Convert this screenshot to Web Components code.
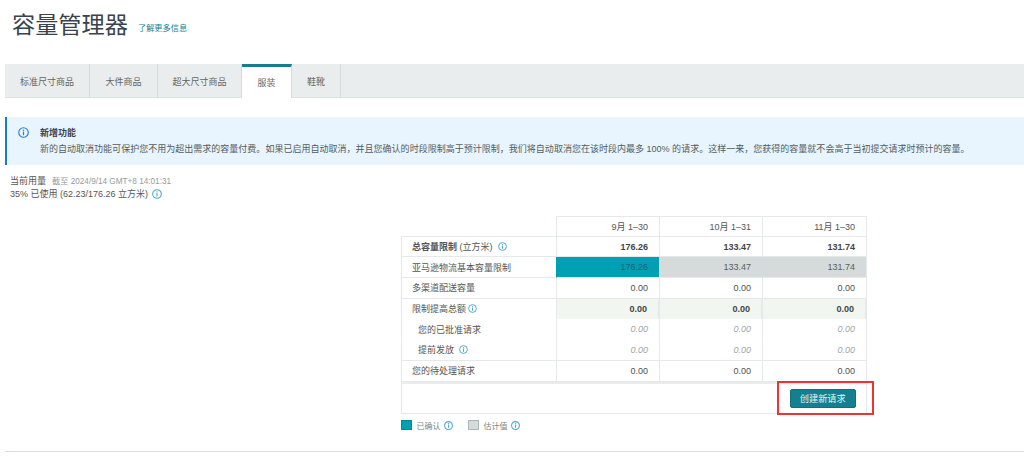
<!doctype html>
<html lang="zh"><head><meta charset="utf-8">
<style>
html,body{margin:0;padding:0;background:#fff}
body{width:1024px;height:456px;overflow:hidden;font-family:"Liberation Sans","Noto Sans CJK SC",sans-serif;color:#444}
.cm{font-family:"Noto Sans CJK TC",sans-serif}
</style></head><body>
<cm-page>
  <cm-header title="容量管理器" link="了解更多信息"></cm-header>
  <cm-tabs items="标准尺寸商品:85,大件商品:68,超大尺寸商品:84,服装:50,鞋靴:49" active="3"></cm-tabs>
  <cm-alert heading="新增功能">新的自动取消功能可保护您不用为超出需求的容量付费。如果已启用自动取消<span class="cm">，</span>并且您确认的时段限制高于预计限制<span class="cm">，</span>我们将自动取消您在该时段内最多 100% 的请求。这样一来<span class="cm">，</span>您获得的容量就不会高于当初提交请求时预计的容量。</cm-alert>
  <cm-usage></cm-usage>
  <cm-table></cm-table>
  <cm-legend></cm-legend>
</cm-page>
<script>
const info=(c='#4aa6c6',s=10,m=0,w=1.25)=>`<svg width="${s}" height="${s}" viewBox="0 0 12 12" style="flex:none;vertical-align:-1.5px;margin-left:${m}px"><circle cx="6" cy="6" r="5.2" fill="none" stroke="${c}" stroke-width="${w}"/><circle cx="6" cy="3.5" r=".8" fill="${c}"/><rect x="5.35" y="5" width="1.3" height="4" fill="${c}"/></svg>`;
function def(name,render){customElements.define(name,class extends HTMLElement{connectedCallback(){if(!this.shadowRoot){this.attachShadow({mode:'open'}).innerHTML=render(this)}}})}
def('cm-page',()=>`<style>:host{display:block;position:relative;height:456px}
.rule{position:absolute;left:5px;right:0;top:451px;height:1px;background:#d5dbdb}</style><slot></slot><div class="rule"></div>`);
def('cm-header',h=>`<style>:host{display:block;height:64px;box-sizing:border-box;padding:12px 0 0 12px}
.w{display:flex;align-items:center;height:26px}
h1{margin:0;font:400 23.2px/26px "Liberation Sans","Noto Sans CJK SC",sans-serif;color:#3a424d}
a{margin-left:10px;font-size:8.2px;color:#14808f;position:relative;top:2px}</style>
<div class="w"><h1>${h.getAttribute('title')}</h1><a>${h.getAttribute('link')}</a></div>`);
def('cm-tabs',h=>{const a=+h.getAttribute('active');return `<style>:host{display:flex;height:34px;margin-left:5px;background:#eaeded;box-shadow:inset 0 -1px 0 #dfe3e3}
.t{box-sizing:border-box;display:flex;align-items:center;justify-content:center;font-size:9px;color:#5f6666;border-right:1px solid #d5dbdb}
.a{background:#fff;border-top:3px solid #14808f;border-right:1px solid #d5dbdb}</style>`+
h.getAttribute('items').split(',').map((s,i)=>{const[t,w]=s.split(':');return `<div class="t ${i==a?'a':''}" style="width:${w}px">${t}</div>`}).join('')});
def('cm-alert',h=>`<style>:host{display:flex;box-sizing:border-box;height:48px;margin:19px 0 0 5px;background:#e8f5fe;border-left:2px solid #1f78c8;padding:10px 0 0 11px;font-size:9px;color:#555c5c}
.b{margin-left:11px;white-space:nowrap}
.h{font-weight:700;line-height:13px;color:#3a424d}.x{line-height:13px;margin-top:2px;font-size:9.02px}</style>
${info('#2c7fd0',11)}<div class="b"><div class="h">${h.getAttribute('heading')}</div><div class="x"><slot></slot></div></div>`);
def('cm-usage',()=>`<style>:host{display:block;margin:10px 0 0 10px;font-size:9px;line-height:13px;color:#555}
small{font-size:8.2px;color:#959b9b;margin-left:6px}</style>
<div>当前用量<small>截至 2024/9/14 GMT+8 14:01:31</small></div><div>35% 已使用 (62.23/176.26 立方米) ${info('#4aa6c6',10,1)}</div>`);
def('cm-table',()=>{
const rows=[
 ['<span><b>总容量限制</b> (立方米)</span>'+info('#4aa6c6',9,5),'b',['176.26','133.47','131.74']],
 ['<span>亚马逊物流基本容量限制</span>','bar',['176.26','133.47','131.74']],
 ['<span>多渠道配送容量</span>','',['0.00','0.00','0.00']],
 ['<span>限制提高总额</span>'+info('#4aa6c6',9,2),'g nb',['0.00','0.00','0.00']],
 ['<span>您的已批准请求</span>','i nb',['0.00','0.00','0.00']],
 ['<span>提前发放</span>'+info('#4aa6c6',9,5),'i',['0.00','0.00','0.00']],
 ['<span>您的待处理请求</span>','',['0.00','0.00','0.00']]];
let g=`<div class="e"></div>`+['9月 1–30','10月 1–31','11月 1–30'].map(t=>`<div class="c hd">${t}</div>`).join('');
rows.forEach(([l,k,v])=>{
 const ind=k.startsWith('i')?'ind':'';
 const nb=k.includes('nb')?'nb':'';
 g+=`<div class="c lab ${ind} ${nb}">${l}</div>`;
 v.forEach((n,i)=>{let cl='c num '+k; if(k=='bar')cl+=i==0?' conf':' est'; g+=`<div class="${cl}">${n}</div>`});
});
return `<style>:host{display:block;position:relative;width:466px;margin:15px 0 0 401px;font-size:9px;color:#555}
.g{display:grid;grid-template-columns:155px 103px 103px 104px;grid-auto-rows:20.7px;border-right:1px solid #e5e9e9}
.e{border-bottom:1px solid #e5e9e9}
.c{box-sizing:border-box;display:flex;align-items:center;border-bottom:1px solid #e5e9e9;border-left:1px solid #e5e9e9;white-space:pre;padding:0 11px 0 10px}
.hd{justify-content:flex-end;border-top:1px solid #e5e9e9;color:#555}
.num{justify-content:flex-end;color:#4d5252}
.lab.ind{padding-left:16px}
.nb{border-bottom-color:transparent}
.num.b{font-weight:700;color:#444}
.num.g{background:#f2f6f1;font-weight:700;color:#444}
.num.i{font-style:italic;color:#a0a6a6}
.conf{background:#00a0b4;color:#1f6370;border-left-color:#00a0b4}.est{background:#d5dbdb;color:#5a6060;border-left-color:#d5dbdb}
.foot{box-sizing:border-box;height:32px;border:1px solid #e5e9e9;border-top:2px solid #e9eded;display:flex;align-items:center;justify-content:flex-end;padding:0 10.5px 0 0}
button{all:unset;box-sizing:border-box;width:65.5px;height:19px;background:#14808f;border-radius:2px;color:#e6f3f4;font-size:9.2px;display:flex;align-items:center;justify-content:center;border:1px solid #11707e}
.red{position:absolute;left:376px;width:97px;top:165px;height:34px;border:2px solid #ee3338;box-sizing:border-box;pointer-events:none}</style>
<div class="g">${g}</div><div class="foot"><button>创建新请求</button></div><div class="red"></div>`});
def('cm-legend',()=>`<style>:host{display:flex;align-items:center;margin:6px 0 0 401px;height:11px;font-size:8px;color:#7d8585}
i{width:10.5px;height:10.5px;box-sizing:border-box;display:block;flex:none}
.c{background:#00a0b4;border:1px solid #11858f}.e{background:#d5dbdb;border:1px solid #aab5b5;margin-left:15.5px}
span{margin-left:5px}</style><i class="c"></i><span>已确认</span>${info('#4aa6c6',9,3,1.4)}<i class="e"></i><span>估计值</span>${info('#4aa6c6',9,3,1.4)}`);
</script></body></html>
